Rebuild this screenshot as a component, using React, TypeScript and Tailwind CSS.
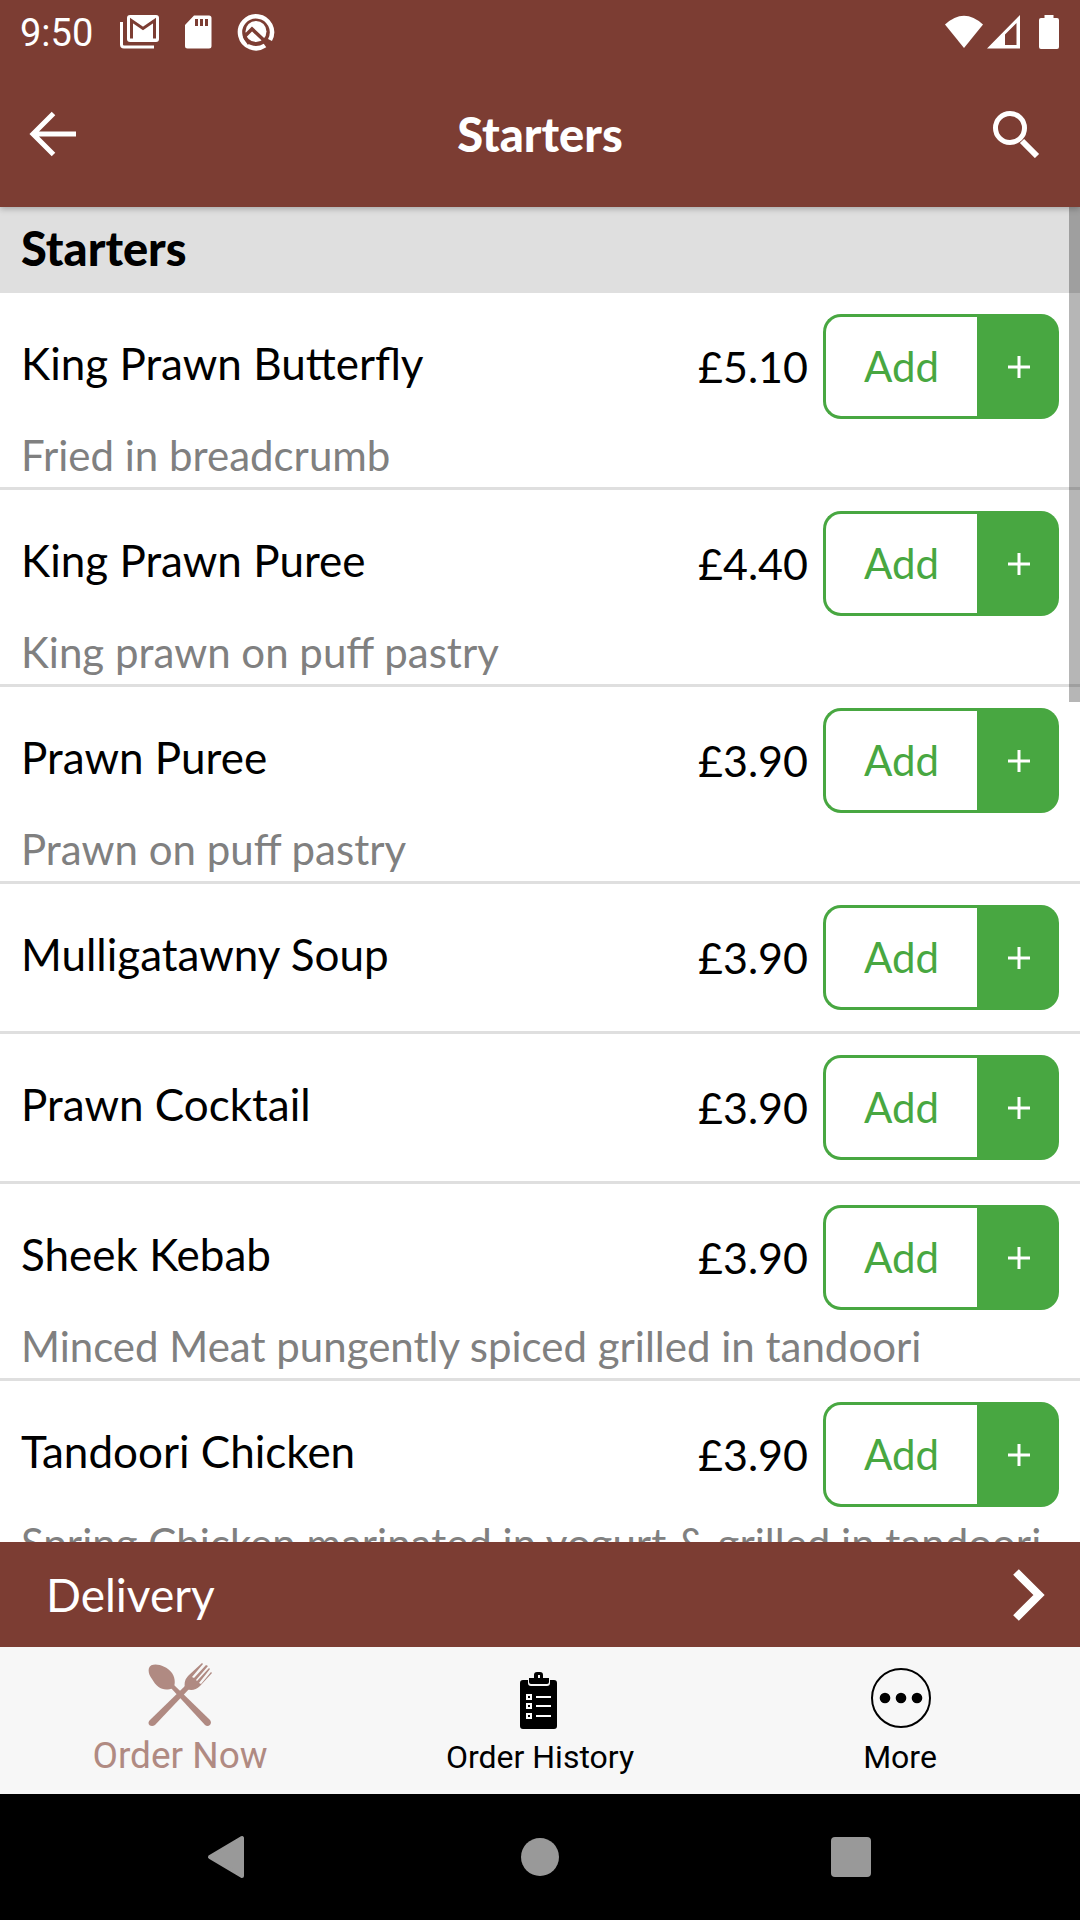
type MenuItem = {
  name: string;
  price: string;
  description?: string;
};

const items: MenuItem[] = [
  { name: "King Prawn Butterfly", price: "£5.10", description: "Fried in breadcrumb" },
  { name: "King Prawn Puree", price: "£4.40", description: "King prawn on puff pastry" },
  { name: "Prawn Puree", price: "£3.90", description: "Prawn on puff pastry" },
  { name: "Mulligatawny Soup", price: "£3.90" },
  { name: "Prawn Cocktail", price: "£3.90" },
  { name: "Sheek Kebab", price: "£3.90", description: "Minced Meat pungently spiced grilled in tandoori" },
  { name: "Tandoori Chicken", price: "£3.90", description: "Spring Chicken marinated in yogurt & grilled in tandoori" },
];

function StatusBar() {
  return (
    <div className="flex h-16 items-center justify-between px-5">
      <div className="flex items-center">
        <span className="w-[100px] pt-[2px] font-['Roboto',sans-serif] text-[38px] leading-[62px]">9:50</span>
        <svg className="h-[34px] w-10" viewBox="0 0 40 34" fill="none">
          <path d="M1.500 7v22.500a2.500 2.500 0 0 0 2.500 2.500h30" stroke="white" strokeWidth="3" />
          <rect x="7" y="0" width="32" height="27" rx="3" fill="white" />
          <path d="M11.500 23.500V5.500L23 13.500 34.500 5.500v18" stroke="#7c3d33" strokeWidth="3" />
        </svg>
        <svg className="ml-6 h-[34px] w-7" viewBox="0 0 28 34">
          <path fill="white" d="M10 .5h15a2.500 2.500 0 0 1 2.500 2.500v28a2.500 2.500 0 0 1-2.500 2.500H3.500A2.500 2.500 0 0 1 1 31V10z" />
          <path fill="#7c3d33" d="M11 4h3v7h-3zM16 4h3v7h-3zM21 4h3v7h-3z" />
        </svg>
        <svg className="ml-[25px] h-[38px] w-[38px]" viewBox="0 0 38 38" fill="none">
          <path d="M28 32.500A16 16 0 1 1 33 27" stroke="white" strokeWidth="4.500" />
          <circle cx="19" cy="18.500" r="10.500" fill="white" />
          <path d="M7 24l8-8 17 16" stroke="#7c3d33" strokeWidth="3.500" />
          <path d="M7 23l5 8" stroke="#7c3d33" strokeWidth="3" />
        </svg>
      </div>
      <div className="flex items-center">
        <svg className="h-9 w-10" viewBox="0 0 40 36">
          <path fill="white" d="M1 10.500Q20-7 39 10.500L20 34z" />
        </svg>
        <svg className="ml-[3px] h-9 w-[33px]" viewBox="0 0 33 36">
          <path fill="white" fillRule="evenodd" d="M0 34.500L33 1v33.500zM18 20.500V31h11.500V9z" />
        </svg>
        <svg className="ml-[18px] h-9 w-[22px]" viewBox="0 0 22 36">
          <path fill="white" d="M6.500 1h9v3H19a2 2 0 0 1 2 2v27a2 2 0 0 1-2 2H3a2 2 0 0 1-2-2V6a2 2 0 0 1 2-2h3.500z" />
        </svg>
      </div>
    </div>
  );
}

function Header() {
  return (
    <header className="relative z-10 shrink-0 bg-[#7c3d33] text-white shadow-[0_2px_6px_rgba(0,0,0,0.25)]">
      <StatusBar />
      <div className="flex h-[143px] items-center justify-between px-7 pb-1">
        <button aria-label="Back" className="w-[60px]">
          <svg className="h-12 w-12" viewBox="0 0 48 48" fill="none" stroke="white" strokeWidth="5">
            <path d="M48 24H5M25.500 3.500L5 24l20.500 20.500" />
          </svg>
        </button>
        <h1 className="text-[47px] font-black leading-[54px]">Starters</h1>
        <button aria-label="Search" className="w-[60px]">
          <svg className="h-12 w-12" viewBox="0 0 48 48" fill="none" stroke="white">
            <circle cx="18" cy="18" r="14.500" strokeWidth="5" />
            <path d="M30 31l15 15" strokeWidth="6" />
          </svg>
        </button>
      </div>
    </header>
  );
}

function MenuRow({ item }: { item: MenuItem }) {
  return (
    <li className="border-b-[3px] border-[#dfdfdf] px-[21px] pt-[21px]">
      <div className="flex h-[105px] items-center">
        <span className="flex-1 pb-2 text-[44px] leading-[50px]">{item.name}</span>
        <span className="mr-[15px] text-[43px] leading-[50px]">{item.price}</span>
        <div className="flex h-full w-[236px]">
          <button
            className="flex-1 rounded-l-[18px] border-[3px] border-r-0 border-[#48a741] text-[42px] text-[#48a741]"
            aria-label={`Add ${item.name}`}
          >
            Add
          </button>
          <button
            className="flex w-[82px] items-center justify-center rounded-r-[18px] bg-[#48a741] pl-[2px] text-white"
            aria-label="One more"
          >
            <svg className="h-[22px] w-[22px]" viewBox="0 0 22 22" stroke="white" strokeWidth="3">
              <path d="M11 0v22M0 11h22" />
            </svg>
          </button>
        </div>
      </div>
      {item.description ? (
        <p className="whitespace-nowrap pb-[7px] pt-[11px] text-[42px] leading-[50px] text-[#808080]">{item.description}</p>
      ) : (
        <div className="h-[21px]" />
      )}
    </li>
  );
}

function TabBar() {
  return (
    <nav className="grid h-[147px] shrink-0 grid-cols-3 bg-[#f7f7f7] font-['Roboto',sans-serif] text-black">
      <a href="#order" className="flex flex-col items-center pt-4 text-[#b08a82]">
        <svg className="h-16 w-16" viewBox="0 0 64 64" fill="currentColor">
          <path d="M1 5C3-1 17 1 24 10c4 6 3 13 1 15-9 4-16 0-21-9C1 12 0 8 1 5z" />
          <path d="M22 24l3-3 37 36c3 4-2 8-5 5z" />
          <path d="M39 21l4 3L7 62c-4 3-9-1-5-5z" />
          <path d="M37 26c-1-7 0-10 4-14L54 0l1 1-11 13 2 1L58 2l2 1-12 14 1 1L61 5l1 1-11 14 2 1 10-12 1 1-12 13c-4 4-9 5-13 3z" />
        </svg>
        <span className="text-[37px] leading-[58px]">Order Now</span>
      </a>
      <a href="#history" className="flex flex-col items-center pt-[22px]">
        <svg className="h-16 w-10" viewBox="0 0 40 64">
          <path d="M4 11h4v3a3 3 0 0 0 3 3h16a3 3 0 0 0 3-3v-3h4a3 3 0 0 1 3 3v43a3 3 0 0 1-3 3H3a3 3 0 0 1-3-3V14a3 3 0 0 1 3-3z" />
          <path fillRule="evenodd" d="M9 9h5V6a3 3 0 0 1 3-3h3a3 3 0 0 1 3 3v3h6v4a2 2 0 0 1-2 2H11a2 2 0 0 1-2-2zM18 6v3h2V6z" />
          <path fill="none" stroke="white" strokeWidth="2" d="M7 26h4v4H7zM7 35h4v4H7zM7 45h4v4H7zM16 28h15M16 37h15M16 47h15" />
        </svg>
        <span className="text-[32px] leading-[48px]">Order History</span>
      </a>
      <a href="#more" className="flex flex-col items-center pt-5">
        <svg className="h-[62px] w-[62px]" viewBox="0 0 62 62">
          <circle cx="32" cy="31" r="29" fill="none" stroke="black" strokeWidth="2" />
          <circle cx="16" cy="31" r="5.300" />
          <circle cx="32" cy="31" r="5.300" />
          <circle cx="48" cy="31" r="5.300" />
        </svg>
        <span className="pt-1 text-[32px] leading-[48px]">More</span>
      </a>
    </nav>
  );
}

function SystemNav() {
  return (
    <div className="grid h-[126px] shrink-0 grid-cols-[1fr_172px_1fr] items-center bg-black">
      <button aria-label="System back" className="ml-auto mr-[208px]">
        <svg className="h-11 w-10" viewBox="0 0 40 44" fill="#999" stroke="#999" strokeWidth="4" strokeLinejoin="round">
          <path d="M36 3v38L4 22z" />
        </svg>
      </button>
      <button aria-label="Home" className="mx-auto h-[38px] w-[38px] rounded-full bg-[#999]" />
      <button aria-label="Recent apps" className="ml-[205px] h-10 w-10 rounded-[4px] bg-[#999]" />
    </div>
  );
}

export default function App() {
  return (
    <div className="flex h-screen w-full flex-col overflow-hidden bg-white font-['Lato',sans-serif] text-black">
      <Header />
      <main className="relative min-h-0 flex-1 overflow-hidden">
        <h2 className="bg-[#dfdfdf] px-[21px] pb-[18px] pt-[14px] text-[47px] font-black leading-[54px]">Starters</h2>
        <ul>
          {items.map((item) => (
            <MenuRow key={item.name} item={item} />
          ))}
        </ul>
        {/* Scroll thumb */}
        <div className="absolute right-0 top-0 h-[495px] w-[11px] bg-black/[.286]" />
      </main>
      <button className="flex h-[105px] shrink-0 items-center justify-between bg-[#7c3d33] pl-[46px] pr-[34px] text-white">
        <span className="text-[46px] leading-[54px]">Delivery</span>
        <svg className="h-[54px] w-[34px]" viewBox="0 0 34 54" fill="none" stroke="white" strokeWidth="8">
          <path d="M4 4l23 23L4 50" />
        </svg>
      </button>
      <TabBar />
      <SystemNav />
    </div>
  );
}
